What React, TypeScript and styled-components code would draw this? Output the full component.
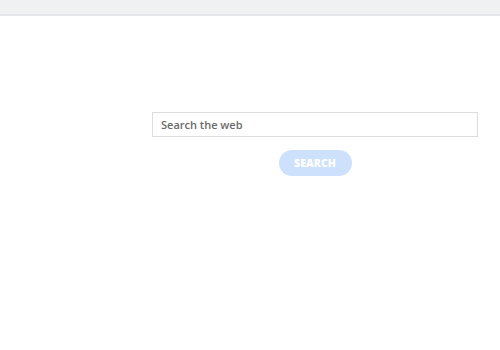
import styled, { createGlobalStyle } from "styled-components";

const GlobalStyle = createGlobalStyle`
  html, body {
    margin: 0;
    padding: 0;
    background: #ffffff;
    font-family: "Open Sans", "Noto Sans", sans-serif;
  }
`;

const TopBar = styled.div`
  height: 14px;
  background-color: #f0f1f3;
  border-bottom: 2px solid #e4e6e9;
`;

const Main = styled.main`
  display: flex;
  justify-content: flex-end;
  padding: 96px 22px 0 152px;
`;

const SearchForm = styled.form`
  flex: 1;
  display: flex;
  flex-direction: column;
  align-items: center;
  gap: 13px;
  margin: 0;
`;

const SearchInput = styled.input`
  box-sizing: border-box;
  width: 100%;
  height: 25px;
  padding: 0 8px;
  border: 1px solid #dcdcdc;
  border-radius: 0;
  font-family: "Open Sans", "Noto Sans", sans-serif;
  font-size: 11px;
  font-weight: 600;
  color: #555;
  outline: none;

  &::placeholder {
    color: #6b6b6b;
  }
`;

const SearchButton = styled.button`
  width: 73px;
  height: 26px;
  padding: 0;
  border: none;
  border-radius: 13px;
  background-color: #cde1fc;
  color: #ffffff;
  font-family: "Open Sans", "Noto Sans", sans-serif;
  font-size: 10.5px;
  font-weight: 800;
  letter-spacing: 0.1px;
  cursor: pointer;
`;

export default function App() {
  return (
    <>
      <GlobalStyle />
      <TopBar />
      <Main>
        <SearchForm onSubmit={(e) => e.preventDefault()}>
          <SearchInput type="text" placeholder="Search the web" />
          <SearchButton type="submit">SEARCH</SearchButton>
        </SearchForm>
      </Main>
    </>
  );
}
